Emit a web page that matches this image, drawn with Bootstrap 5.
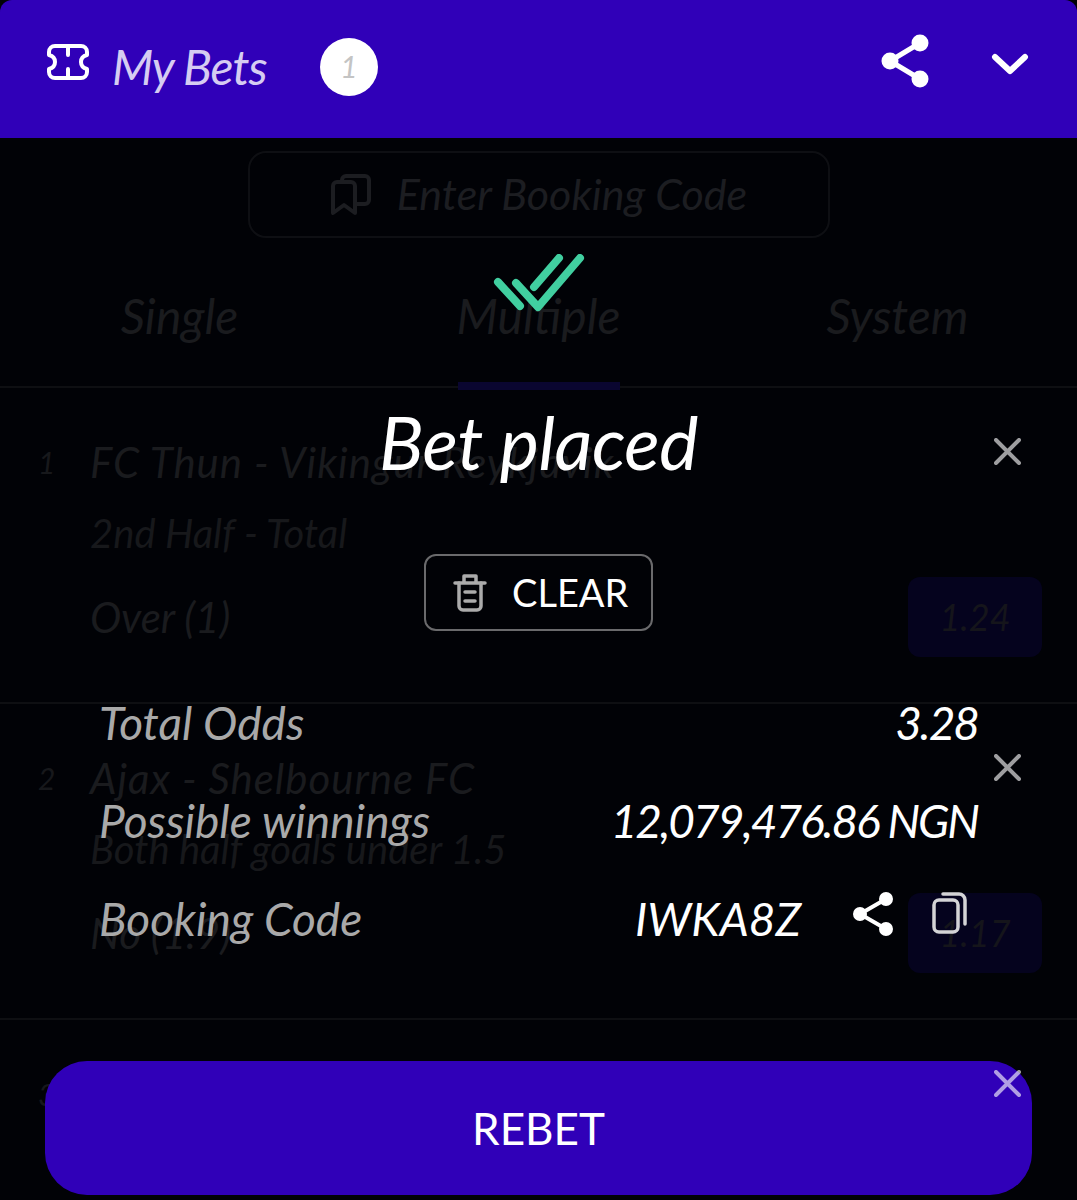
<!DOCTYPE html>
<html lang="en">
<head>
  <meta charset="UTF-8">
  <meta name="viewport" content="width=device-width, initial-scale=1.0">
  <title>My Bets</title>
  <link href="https://cdn.jsdelivr.net/npm/bootstrap@5.3.0/dist/css/bootstrap.min.css" rel="stylesheet">
  <style>
    body {
      background-color: #010206;
      font-family: "Lato", "Open Sans", sans-serif;
      font-style: italic;
      overflow: hidden;
    }
    .page-wrap { height: 1200px; overflow: hidden; }
    .top-bar {
      height: 138px;
      background: #3000b8;
      border-radius: 12px 12px 0 0;
      padding: 0 48px 14px 47px;
    }
    .top-title { color: #d6ccf2; font-size: 48px; margin-left: 23px; margin-top: 9px; width: 208px; letter-spacing: -1px; }
    .count-dot {
      width: 58px; height: 58px; border-radius: 50%; margin-top: 9px;
      background: #fff; color: #c4c4c4; font-size: 30px;
    }
    .share-top { margin-bottom: 3px; }
    .chevron-top { margin-left: 62px; margin-top: 3px; }
    .booking-box {
      width: 582px; height: 87px; margin: 13px auto 0;
      border: 2px solid #0e0f13; border-radius: 18px;
      color: #1c1d21; font-size: 43px; gap: 25px;
    }
    .tab-strip { height: 150px; border-bottom: 2px solid #0e0f12; color: #1a1b1e; font-size: 48px; padding-top: 42px; position: relative; }
    .tab-mark { position: absolute; left: 458px; bottom: -4px; width: 162px; height: 8px; background: #0a0630; }
    .bet-row { height: 316px; border-bottom: 2px solid #0e0f12; padding: 0 35px 0 38px; color: #1a1b1e; }
    .bet-num { width: 52px; padding-top: 52px; font-size: 30px; color: #17181b; }
    .bet-title { font-size: 42px; line-height: 60px; padding-top: 44px; letter-spacing: 1px; }
    .bet-sub { font-size: 40px; line-height: 60px; margin-top: 11px; color: #17181b; }
    .bet-pick { font-size: 42px; line-height: 60px; margin-top: 24px; }
    .bet-side { width: 134px; padding-top: 50px; }
    .close-x { position: relative; z-index: 3; align-self: flex-end; margin-right: 21px; display: block; }
    .odds-chip {
      width: 134px; height: 80px; margin-top: 112px;
      background: #05031e; border-radius: 12px; color: #15151b; font-size: 36px;
    }
    .result-layer { position: absolute; top: 138px; left: 0; width: 100%; height: 1062px; z-index: 2; padding-top: 116px; }
    .result-title { color: #fff; font-size: 74px; line-height: 90px; margin-top: 85px; letter-spacing: -.5px; }
    .clear-btn {
      width: 229px; height: 77px; margin-top: 67px;
      border: 2px solid #6a6a6c; border-radius: 12px;
      color: #fff; font-size: 38px; padding: 0 0 0 27px; gap: 25px;
    }
    .clear-btn:hover { color: #fff; border-color: #6a6a6c; }
    .result-rows { width: 879px; margin-top: 42px; }
    .result-line { height: 98px; font-size: 46px; color: #a9a9a9; }
    .result-val { color: #fff; letter-spacing: -2px; }
    .code-val { letter-spacing: 0; }
    .share-small { margin-left: 51px; margin-bottom: 8px; }
    .copy-small { margin-left: 38px; margin-right: 10px; margin-bottom: 10px; }
    .rebet-btn {
      width: 987px; height: 134px; margin-top: 94px;
      background: #3000b8; border: 0; border-radius: 42px;
      color: #fff; font-size: 44px;
    }
    .rebet-btn:hover { background: #3000b8; color: #fff; }
  </style>
</head>
<body>
  <div class="page-wrap position-relative">
    <div class="top-bar d-flex align-items-center">
      <svg width="42" height="36" viewBox="0 0 42 36" fill="none" stroke="#fff" stroke-width="4" stroke-linejoin="round" stroke-linecap="round">
        <path d="M8 2H34A6 6 0 0 1 40 8V11C36 12 34 15 34 18C34 21 36 24 40 25V28A6 6 0 0 1 34 34H8A6 6 0 0 1 2 28V25C6 24 8 21 8 18C8 15 6 12 2 11V8A6 6 0 0 1 8 2Z"/>
        <path d="M21 2V11M21 25V34"/>
      </svg>
      <span class="top-title">My Bets</span>
      <span class="count-dot d-flex align-items-center justify-content-center">1</span>
      <svg class="ms-auto share-top" width="48" height="54" viewBox="0 0 48 54" fill="#fff" stroke="#fff" stroke-width="5">
        <path d="M39 9L9 27L39 45" fill="none"/>
        <circle cx="39" cy="9" r="6"/><circle cx="9" cy="27" r="6"/><circle cx="39" cy="45" r="6"/>
      </svg>
      <svg class="chevron-top" width="38" height="22" viewBox="0 0 38 22" fill="none" stroke="#fff" stroke-width="6" stroke-linecap="round" stroke-linejoin="round">
        <path d="M4 4L19 18L34 4"/>
      </svg>
    </div>

    <div class="booking-box d-flex align-items-center justify-content-center">
      <svg width="42" height="42" viewBox="0 0 42 42" fill="none" stroke="#1c1d21" stroke-width="4" stroke-linejoin="round">
        <path d="M3 12A4 4 0 0 1 7 8H21A4 4 0 0 1 25 12V39L14 31L3 39Z"/>
        <path d="M12 8V6A4 4 0 0 1 16 2H35A4 4 0 0 1 39 6V26A4 4 0 0 1 35 30H25"/>
      </svg>
      <span>Enter Booking Code</span>
    </div>

    <div class="tab-strip row g-0 text-center">
      <div class="col-4">Single</div>
      <div class="col-4">Multiple</div>
      <div class="col-4">System</div>
      <div class="tab-mark"></div>
    </div>

    <div class="bet-row d-flex">
      <div class="bet-num">1</div>
      <div class="flex-grow-1">
        <div class="bet-title">FC Thun - Vikingur Reykjavik</div>
        <div class="bet-sub">2nd Half - Total</div>
        <div class="bet-pick">Over (1)</div>
      </div>
      <div class="bet-side d-flex flex-column">
        <svg class="close-x" width="27" height="27" viewBox="0 0 27 27" stroke="#fff" stroke-opacity=".62" stroke-width="4" stroke-linecap="round"><path d="M2 2L25 25M25 2L2 25"/></svg>
        <div class="odds-chip d-flex align-items-center justify-content-center">1.24</div>
      </div>
    </div>

    <div class="bet-row d-flex">
      <div class="bet-num">2</div>
      <div class="flex-grow-1">
        <div class="bet-title">Ajax - Shelbourne FC</div>
        <div class="bet-sub">Both half goals under 1.5</div>
        <div class="bet-pick">No (1.9)</div>
      </div>
      <div class="bet-side d-flex flex-column">
        <svg class="close-x" width="27" height="27" viewBox="0 0 27 27" stroke="#fff" stroke-opacity=".62" stroke-width="4" stroke-linecap="round"><path d="M2 2L25 25M25 2L2 25"/></svg>
        <div class="odds-chip d-flex align-items-center justify-content-center">1.17</div>
      </div>
    </div>

    <div class="bet-row d-flex">
      <div class="bet-num">3</div>
      <div class="flex-grow-1"></div>
      <div class="bet-side d-flex flex-column">
        <svg class="close-x" width="27" height="27" viewBox="0 0 27 27" stroke="#fff" stroke-opacity=".62" stroke-width="4" stroke-linecap="round"><path d="M2 2L25 25M25 2L2 25"/></svg>
      </div>
    </div>

    <div class="result-layer d-flex flex-column align-items-center">
      <svg width="92" height="58" viewBox="0 0 92 58" fill="none" stroke="#41cfa0" stroke-width="8" stroke-linecap="round" stroke-linejoin="round">
        <path d="M5 28L27 52"/>
        <path d="M23 29L45 53L87 4"/>
        <path d="M41 33L66 4"/>
      </svg>
      <div class="result-title">Bet placed</div>
      <button class="btn clear-btn d-flex align-items-center">
        <svg width="34" height="38" viewBox="0 0 34 38" fill="none" stroke="#ababab" stroke-width="3.5" stroke-linecap="round" stroke-linejoin="round">
          <path d="M2 9H32M11 8V2H23V8"/>
          <path d="M6 9V32A4 4 0 0 0 10 36H24A4 4 0 0 0 28 32V9"/>
          <path d="M12 18H22M12 27H22"/>
        </svg>
        <span>CLEAR</span>
      </button>
      <div class="result-rows">
        <div class="result-line d-flex justify-content-between align-items-center">
          <span>Total Odds</span><span class="result-val">3.28</span>
        </div>
        <div class="result-line d-flex justify-content-between align-items-center">
          <span>Possible winnings</span><span class="result-val">12,079,476.86 NGN</span>
        </div>
        <div class="result-line d-flex align-items-center">
          <span class="me-auto">Booking Code</span>
          <span class="result-val code-val">IWKA8Z</span>
          <svg class="share-small" width="42" height="46" viewBox="0 0 42 46" fill="#fff" stroke="#fff" stroke-width="4">
            <path d="M34 8L8 23L34 38" fill="none"/>
            <circle cx="34" cy="8" r="5"/><circle cx="8" cy="23" r="5"/><circle cx="34" cy="38" r="5"/>
          </svg>
          <svg class="copy-small" width="36" height="42" viewBox="0 0 36 42" fill="none" stroke="#d4d4d6" stroke-width="3.5" stroke-linecap="round">
            <rect x="2" y="8" width="24" height="32" rx="5"/>
            <path d="M11 2H27A6 6 0 0 1 33 8V32"/>
          </svg>
        </div>
      </div>
      <button class="btn rebet-btn">REBET</button>
    </div>
  </div>

  <script src="https://cdn.jsdelivr.net/npm/bootstrap@5.3.0/dist/js/bootstrap.bundle.min.js"></script>
</body>
</html>
